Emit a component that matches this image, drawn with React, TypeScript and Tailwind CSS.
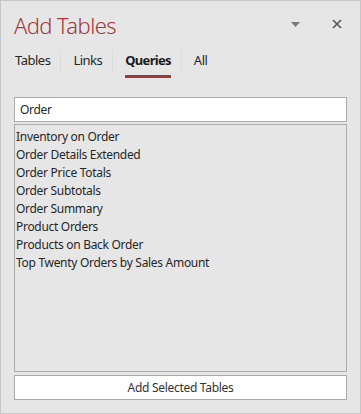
const items = [
  'Inventory on Order',
  'Order Details Extended',
  'Order Price Totals',
  'Order Subtotals',
  'Order Summary',
  'Product Orders',
  'Products on Back Order',
  'Top Twenty Orders by Sales Amount',
]

const tabs = ['Tables', 'Links', 'Queries', 'All']

export default function App() {
  return (
    <div
      className="w-[361px] h-[414px] flex flex-col bg-[#e6e6e6] border border-[#c6c6c6] text-[#262626]"
      style={{ fontFamily: '"Segoe UI", "Noto Sans", sans-serif' }}
    >
      {/* header */}
      <div className="flex items-center h-[46px] pl-[13px] pr-[15px]">
        <h1 className="flex-1 text-[22px] font-light tracking-[-0.6px] text-[#a4373a] leading-none pt-[1px]">
          Add Tables
        </h1>
        <button className="w-[16px] h-[16px] flex items-center justify-center mr-[26px]">
          <svg width="9" height="5" viewBox="0 0 9 5">
            <path d="M0 0h9L4.5 5z" fill="#7a7a7a" />
          </svg>
        </button>
        <button className="w-[16px] h-[16px] flex items-center justify-center">
          <svg width="10" height="10" viewBox="0 0 10 10">
            <path d="M1 1l8 8M9 1l-8 8" stroke="#5a5a5a" strokeWidth="1.7" />
          </svg>
        </button>
      </div>

      {/* tabs */}
      <div className="flex items-start h-[31px] pl-[14px]">
        {tabs.map((t, i) => (
          <div key={t} className="flex items-start">
            {i > 0 && <div className="w-px h-[22px] mt-[3px] bg-[#dcdcdc]" />}
            <div
              className={
                'flex flex-col items-center ' +
                (i === 0 ? 'pr-[10px]' : 'pl-[12px] pr-[10px]')
              }
            >
              <span
                className={
                  'text-[13px] leading-[26px] ' +
                  (t === 'Queries'
                    ? 'font-bold tracking-[-0.7px] text-[#1a1a1a]'
                    : 'tracking-[-0.5px] text-[#262626]')
                }
              >
                {t}
              </span>
              <div className={'h-[3px] w-full mt-[2px] ' + (t === 'Queries' ? 'bg-[#a4373a]' : 'bg-transparent')} />
            </div>
          </div>
        ))}
      </div>

      {/* body */}
      <div className="flex-1 flex flex-col px-[13px] pt-[19px] pb-[13px]">
        <div className="h-[25px] bg-white border border-[#ababab] flex items-center px-[5px] text-[12px] tracking-[-0.3px]">
          Order
        </div>
        <div className="flex-1 mt-[2px] border border-[#ababab] py-[3px] px-[1px]">
          {items.map((it) => (
            <div key={it} className="h-[18px] leading-[18px] text-[12px] tracking-[-0.3px] text-[#262626]">
              {it}
            </div>
          ))}
        </div>
        <button className="mt-[3px] h-[25px] bg-white border border-[#ababab] text-[12px] tracking-[-0.3px] text-[#333]">
          Add Selected Tables
        </button>
      </div>
    </div>
  )
}
